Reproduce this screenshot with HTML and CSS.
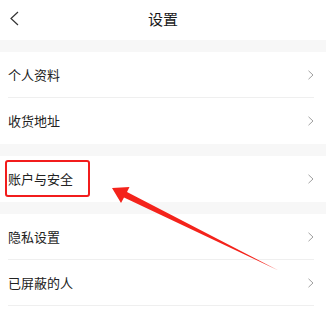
FILE: index.html
```html
<!DOCTYPE html>
<html lang="zh">
<head>
<meta charset="utf-8">
<title>设置</title>
<link rel="stylesheet" href="styles.css">
</head>
<body>
<div class="page">
  <header class="topbar">
    <svg class="back" width="10" height="16" viewBox="0 0 10 16"><polyline points="8,1 1,7.5 8,14" fill="none" stroke="#333" stroke-width="1.2"/></svg>
    <h1 class="title">设置</h1>
  </header>

  <section class="group">
    <div class="row"><span class="label">个人资料</span><svg class="chev" width="8" height="10" viewBox="0 0 8 10"><polyline points="1.5,0.8 6,5 1.5,9.2" fill="none" stroke="#a0a0a0" stroke-width="1"/></svg></div>
    <div class="row"><span class="label">收货地址</span><svg class="chev" width="8" height="10" viewBox="0 0 8 10"><polyline points="1.5,0.8 6,5 1.5,9.2" fill="none" stroke="#a0a0a0" stroke-width="1"/></svg></div>
  </section>

  <section class="group">
    <div class="row row--marked"><span class="label">账户与安全</span><svg class="chev" width="8" height="10" viewBox="0 0 8 10"><polyline points="1.5,0.8 6,5 1.5,9.2" fill="none" stroke="#a0a0a0" stroke-width="1"/></svg><span class="highlight"></span></div>
  </section>

  <section class="group group--open">
    <div class="row"><span class="label">隐私设置</span><svg class="chev" width="8" height="10" viewBox="0 0 8 10"><polyline points="1.5,0.8 6,5 1.5,9.2" fill="none" stroke="#a0a0a0" stroke-width="1"/></svg></div>
    <div class="row"><span class="label">已屏蔽的人</span><svg class="chev" width="8" height="10" viewBox="0 0 8 10"><polyline points="1.5,0.8 6,5 1.5,9.2" fill="none" stroke="#a0a0a0" stroke-width="1"/></svg></div>
  </section>

  <svg class="arrow" width="326" height="314" viewBox="0 0 326 314">
    <polygon points="112,188 129.5,187 127,192 278.5,270.5 124,197.5 121,203" fill="#f4231b"/>
  </svg>
</div>
</body>
</html>
```

FILE: styles.css
```css
html, body {
  margin: 0;
  padding: 0;
  overflow: hidden;
}
body {
  background: #f7f7f7;
  font-family: "Noto Sans CJK SC", "Noto Sans", sans-serif;
  color: #222;
}
.page {
  position: relative;
  width: 326px;
  height: 314px;
  overflow: hidden;
}
.topbar {
  height: 40px;
  background: #fff;
  display: flex;
  align-items: center;
  justify-content: center;
  padding-bottom: 3px;
  box-sizing: border-box;
  position: relative;
}
.back {
  position: absolute;
  left: 10px;
  top: 11px;
}
.title {
  margin: 0;
  font-size: 15px;
  font-weight: normal;
  color: #1a1a1a;
}
.group {
  background: #fff;
  margin-top: 12px;
}
.group--open {
  padding-bottom: 20px;
}
.row {
  position: relative;
  height: 46px;
  box-sizing: border-box;
  margin: 0 12px 0 8px;
  border-bottom: 1px solid #efefef;
  display: flex;
  align-items: center;
  justify-content: space-between;
}
.row:last-child {
  border-bottom: none;
}
.group--open .row:last-child {
  border-bottom: 1px solid #efefef;
}
.label {
  font-size: 13px;
  color: #222;
  line-height: 1;
  padding-bottom: 1px;
}
.chev {
  margin-right: -1px;
}
.highlight {
  position: absolute;
  left: -3px;
  top: 4px;
  width: 85px;
  height: 37px;
  box-sizing: border-box;
  border: 2.5px solid #f21c1c;
  border-radius: 3px;
}
.arrow {
  position: absolute;
  left: 0;
  top: 0;
  pointer-events: none;
}
```
